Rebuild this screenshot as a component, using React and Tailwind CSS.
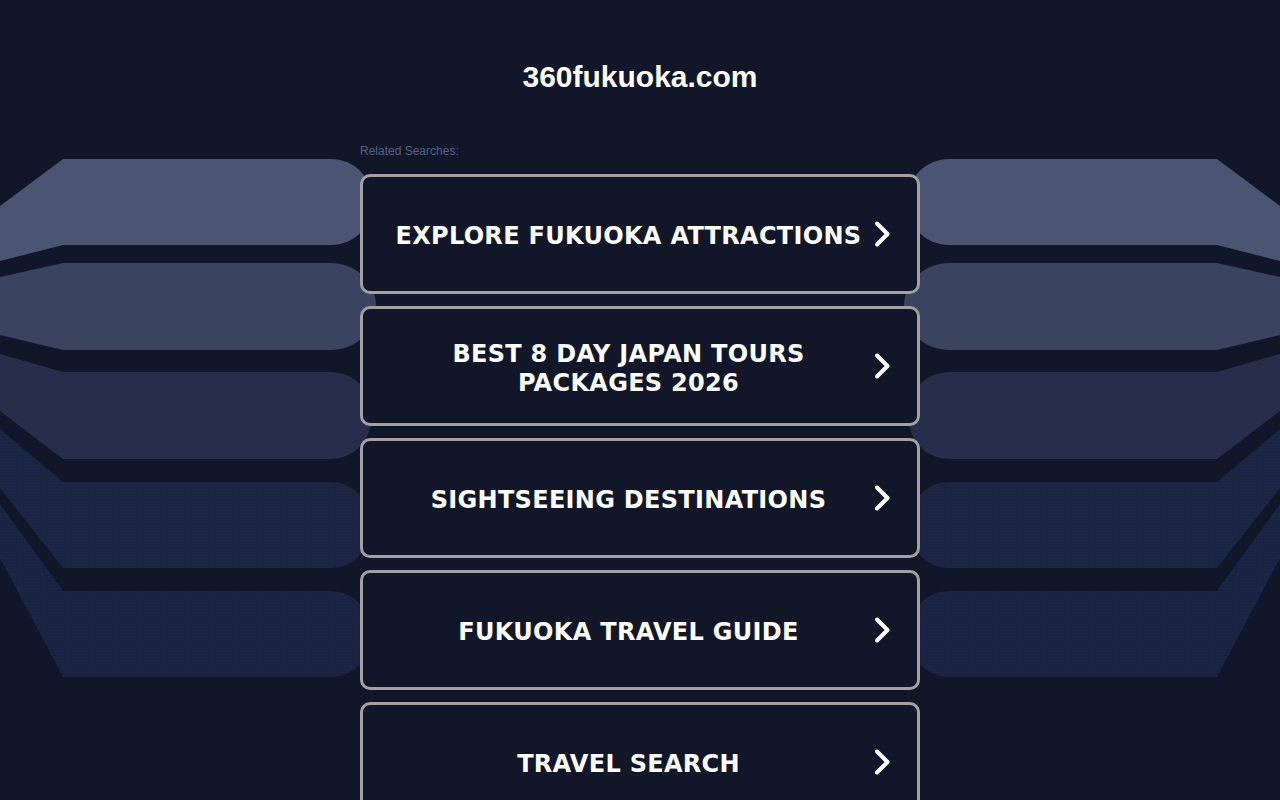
const searches = [
    "EXPLORE FUKUOKA ATTRACTIONS",
    "BEST 8 DAY JAPAN TOURS PACKAGES 2026",
    "SIGHTSEEING DESTINATIONS",
    "FUKUOKA TRAVEL GUIDE",
    "TRAVEL SEARCH",
]

// left-side band shapes, right side is mirrored
const bands = [
    { fill: "#4b5573", d: "M0 206 L63 159 L330 159 C356 159 372 178 372 202 C372 226 356 245 330 245 L63 245 L0 261 Z" },
    { fill: "#3a4360", d: "M0 277 L63 263 L330 263 C358 263 376 284 376 306 C376 329 358 350 330 350 L63 350 L0 335 Z" },
    { fill: "#262e4c", d: "M0 354 L63 372 L330 372 C356 372 372 392 372 415 C372 438 356 459 330 459 L63 459 L0 411 Z" },
    { fill: "#1c2443", d: "M0 429 L63 482 L330 482 C356 482 370 502 370 525 C370 548 356 568 330 568 L63 568 L0 488 Z" },
    { fill: "#1b2343", d: "M0 504 L63 591 L330 591 C356 591 370 611 370 634 C370 657 356 677 330 677 L63 677 L0 558 Z" },
]

function Backdrop() {
    return (
        <svg className="absolute inset-x-0 top-0 w-full h-[800px]" viewBox="0 0 1280 800" preserveAspectRatio="none">
            <defs>
                <pattern id="dots" width="3" height="3" patternUnits="userSpaceOnUse">
                    <rect width="1" height="1" fill="#26305a" />
                </pattern>
            </defs>
            {bands.map((b, i) => (
                <g key={i}>
                    <path d={b.d} fill={b.fill} />
                    <path d={b.d} fill={b.fill} transform="translate(1280 0) scale(-1 1)" />
                    {i > 2 && (
                        <>
                            <path d={b.d} fill="url(#dots)" opacity="0.4" />
                            <path d={b.d} fill="url(#dots)" opacity="0.4" transform="translate(1280 0) scale(-1 1)" />
                        </>
                    )}
                </g>
            ))}
        </svg>
    )
}

function Chevron() {
    return (
        <svg className="w-[24px] h-[28px] shrink-0" viewBox="0 0 24 28" fill="none">
            <path d="M9 3.5 L19.5 14 L9 24.5" stroke="#ffffff" strokeWidth="4" strokeLinecap="round" strokeLinejoin="round" />
        </svg>
    )
}

export default function App() {
    return (
        <div className="relative min-h-screen h-[800px] overflow-hidden bg-[#111729]">
            <Backdrop />
            <div className="relative w-[560px] mx-auto">
                <h1 className="pt-[58px] text-[30px] leading-[38px] font-bold text-center text-white font-['Liberation_Sans',Arial,sans-serif]">
                    360fukuoka.com
                </h1>
                <p className="mt-[48px] text-[12px] leading-[14px] text-[#566080] font-['Liberation_Sans',Arial,sans-serif]">
                    Related Searches:
                </p>
                <div className="mt-[16px] flex flex-col gap-[12px]">
                    {searches.map((s) => (
                        <div
                            key={s}
                            className="h-[120px] shrink-0 flex items-center pl-[26px] pr-[25px] rounded-[10px] border-[3px] border-[#a1a1a1] bg-[#111729]"
                        >
                            <span className="flex-1 pt-[5px] text-center text-white font-bold text-[24px] leading-[29px] tracking-[0.3px] font-['DejaVu_Sans',Verdana,sans-serif]">
                                {s}
                            </span>
                            <Chevron />
                        </div>
                    ))}
                </div>
            </div>
        </div>
    )
}
